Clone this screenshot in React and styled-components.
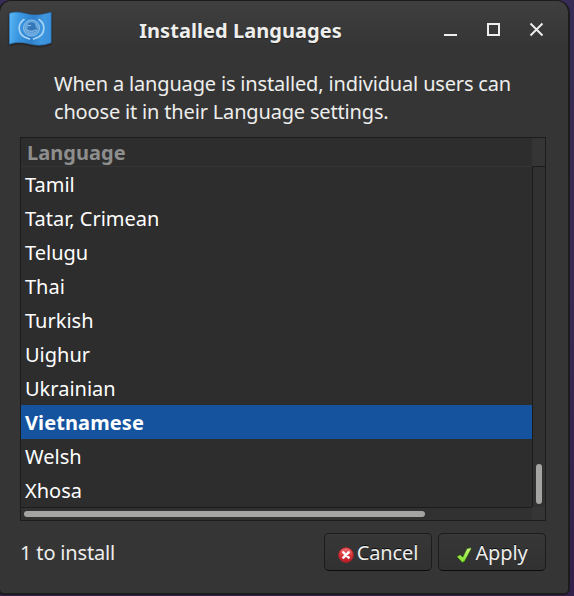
import React from "react";
import styled, { createGlobalStyle } from "styled-components";

const GlobalStyle = createGlobalStyle`
  * { box-sizing: border-box; }
  body {
    margin: 0;
    width: 574px;
    height: 596px;
    overflow: hidden;
    background: linear-gradient(#372c55, #37294f 50%, #32204a);
    font-family: "Noto Sans", sans-serif;
    font-size: 20px;
    line-height: 28px;
    color: #eeeeec;
  }
`;

const Window = styled.main`
  width: 572px;
  height: 595px;
  margin-left: -2px;
  display: flex;
  flex-direction: column;
  border: 2px solid #1c1c1c;
  border-top-width: 1px;
  border-radius: 13px 13px 6px 6px;
  background: linear-gradient(#3f3f3f, #353535 48px);
`;

const TitleBar = styled.header`
  height: 59px;
  flex: none;
  display: grid;
  grid-template-columns: 111px 260px 1fr;
  align-items: center;
`;

const FlagIcon = styled.svg`
  width: 46px;
  height: 38px;
  margin: -3px 0 0 7px;
`;

const Title = styled.h1`
  margin: 0;
  font-size: 20px;
  font-weight: 700;
  line-height: 28px;
  letter-spacing: 0.05px;
  text-align: center;
  white-space: nowrap;
  padding-right: 1px;
  text-shadow: 0 1px 1px #222;
`;

const WindowControls = styled.div`
  display: flex;
  gap: 30px;
  padding-left: 73px;
  margin-top: -2px;
`;

const ControlIcon = styled.svg`
  width: 13px;
  height: 13px;
  display: block;
  overflow: visible;
`;

const Description = styled.p`
  margin: 10px 0 0 54px;
  width: 480px;
  height: 67px;
  flex: none;
  letter-spacing: -0.17px;
`;

const LanguageTable = styled.section`
  width: 526px;
  height: 384px;
  flex: none;
  margin-left: 20px;
  display: grid;
  grid-template-columns: 511px 13px;
  grid-template-rows: 29px 340px 13px;
  border: 1px solid #1c1c1c;
  background: #353535;
`;

const ColumnHeader = styled.div`
  padding-left: 6px;
  line-height: 30px;
  letter-spacing: 0.05px;
  border-bottom: 1px solid #353535;
  background: #2d2d2d;
  color: #8e8e8d;
  font-weight: 700;
`;

const HeaderCorner = styled.div`
  background: #353535;
`;

const LanguageList = styled.div`
  background: #2d2d2d;
  color: #fff;
`;

const LanguageRow = styled.div`
  height: 34px;
  padding-left: 4px;
  line-height: 36px;
  font-weight: ${(p) => (p.$selected ? 700 : 400)};
  letter-spacing: ${(p) => (p.$selected ? "0.1px" : "0")};
  background: ${(p) => (p.$selected ? "#15539e" : "transparent")};
`;

const VerticalTrack = styled.div`
  margin-top: -1px;
  display: flex;
  flex-direction: column;
  justify-content: flex-end;
  padding: 0 3px 3px;
  border: solid #1c1c1c;
  border-width: 1px 0 0 1px;
  background: #313131;
`;

const HorizontalTrack = styled.div`
  padding: 3px;
  border-top: 1px solid #1c1c1c;
  background: #313131;
`;

const Thumb = styled.div`
  width: ${(p) => p.$width}px;
  height: ${(p) => p.$height}px;
  border-radius: 3px;
  background: #a4a4a3;
`;

const Footer = styled.footer`
  display: flex;
  align-items: center;
  gap: 6px;
  height: 38px;
  margin: 12px 22px 0 20px;
`;

const Status = styled.span`
  flex: 1;
  padding-top: 2px;
  letter-spacing: -0.16px;
`;

const Button = styled.button`
  width: 108px;
  height: 38px;
  padding: 1px 0 0;
  display: flex;
  align-items: center;
  justify-content: center;
  gap: 3px;
  border: 1px solid #1c1c1c;
  border-bottom-color: #0c0c0c;
  border-radius: 5px;
  background: linear-gradient(#373737, #313131);
  box-shadow: inset 0 1px #3a3a3a;
  color: #eeeeec;
  font: inherit;
  letter-spacing: -0.1px;
  text-shadow: 0 -1px rgba(0, 0, 0, 0.8);
`;

const ButtonIcon = styled.svg`
  width: 16px;
  height: 16px;
  margin-top: 4px;
  flex: none;
`;

const languages = [
  "Tamil",
  "Tatar, Crimean",
  "Telugu",
  "Thai",
  "Turkish",
  "Uighur",
  "Ukrainian",
  "Vietnamese",
  "Welsh",
  "Xhosa",
];

function WorldFlag() {
  return (
    <FlagIcon viewBox="0 0 46 38">
      <defs>
        <linearGradient id="flag" x2="1" y2=".1">
          <stop offset="0" stopColor="#5db9f4" />
          <stop offset=".25" stopColor="#3b98e2" />
          <stop offset=".6" stopColor="#2f7fcb" />
          <stop offset=".85" stopColor="#3f98e0" />
          <stop offset="1" stopColor="#3a90dc" />
        </linearGradient>
        <filter id="shade" x="-10%" y="-10%" width="120%" height="130%">
          <feDropShadow dx="0" dy="1" stdDeviation="1" floodColor="#111" floodOpacity=".7" />
        </filter>
      </defs>
      <path
        d="M2.500 3.500C9 1 15 3 22 4.500S36 4.500 44 2.500V32.500C36 35.500 31 35.500 24 34S10 31 2.500 34Z"
        fill="url(#flag)"
        stroke="#2e7fc4"
        strokeWidth=".7"
        filter="url(#shade)"
      />
      <circle cx="24.500" cy="18" r="8" fill="#5a9fd9" stroke="#8fc2ea" strokeWidth="1" />
      <circle cx="24.500" cy="18" r="6" fill="none" stroke="#8fc2ea" strokeWidth=".6" />
      <path
        d="M21 13.500q3.500-2.500 7 0l.5 3.500 2.500 2-3 2.500h-6l-2.500-2 2-2z"
        fill="#2d70b1"
        fillOpacity=".85"
      />
      <path d="M19.500 19.500q5 3.500 10 0M21 15.500h3" fill="none" stroke="#9fcbee" strokeWidth=".9" />
      <path
        d="M17 9.500C10 14 11 23.500 17.500 27l5 2M32 9.500C39 14 38 23.500 31.500 27l-5 2"
        fill="none"
        stroke="#a9d5f3"
        strokeWidth="1.600"
        strokeLinecap="round"
      />
    </FlagIcon>
  );
}

function CancelIcon() {
  return (
    <ButtonIcon viewBox="0 0 16 16">
      <defs>
        <linearGradient id="cancel" x2="0" y2="1">
          <stop stopColor="#ef7476" />
          <stop offset=".5" stopColor="#d9363b" />
          <stop offset="1" stopColor="#b91c25" />
        </linearGradient>
      </defs>
      <circle cx="8" cy="8" r="7.300" fill="url(#cancel)" stroke="#b62129" />
      <path d="M5.300 5.300l5.400 5.400m0-5.400l-5.400 5.400" stroke="#fff" strokeWidth="2.400" strokeLinecap="round" />
    </ButtonIcon>
  );
}

function ApplyIcon() {
  return (
    <ButtonIcon viewBox="0 0 16 16">
      <defs>
        <linearGradient id="apply" x2="0" y2="1">
          <stop stopColor="#c5f77b" />
          <stop offset="1" stopColor="#7ee02a" />
        </linearGradient>
      </defs>
      <path
        d="M.8 9.500l3.500-1.700 2.400 2.400L11 1.600l3.700-.9.600 1.100-6.800 12.700-2.300 1Z"
        fill="url(#apply)"
        stroke="#285509"
        strokeWidth=".6"
        strokeLinejoin="round"
      />
    </ButtonIcon>
  );
}

export default function App() {
  return (
    <>
      <GlobalStyle />
      <Window>
        <TitleBar>
          <WorldFlag />
          <Title>Installed Languages</Title>
          <WindowControls>
            <ControlIcon viewBox="0 0 13 13">
              <path d="M0 12h13" stroke="#eeeeec" strokeWidth="2" />
            </ControlIcon>
            <ControlIcon viewBox="0 0 13 13">
              <path d="M1 1h11v11H1z" fill="none" stroke="#eeeeec" strokeWidth="2" />
            </ControlIcon>
            <ControlIcon viewBox="0 0 13 13">
              <path d="M.5 .5l12 12M12.500 .5l-12 12" stroke="#eeeeec" strokeWidth="1.900" />
            </ControlIcon>
          </WindowControls>
        </TitleBar>
        <Description>
          When a language is installed, individual users can
          <br />
          choose it in their Language settings.
        </Description>
        <LanguageTable>
          <ColumnHeader>Language</ColumnHeader>
          <HeaderCorner />
          <LanguageList>
            {languages.map((name) => (
              <LanguageRow key={name} $selected={name === "Vietnamese"}>
                {name}
              </LanguageRow>
            ))}
          </LanguageList>
          <VerticalTrack>
            <Thumb $width={6} $height={40} />
          </VerticalTrack>
          <HorizontalTrack>
            <Thumb $width={401} $height={6} />
          </HorizontalTrack>
        </LanguageTable>
        <Footer>
          <Status>1 to install</Status>
          <Button>
            <CancelIcon />
            Cancel
          </Button>
          <Button>
            <ApplyIcon />
            Apply
          </Button>
        </Footer>
      </Window>
    </>
  );
}
